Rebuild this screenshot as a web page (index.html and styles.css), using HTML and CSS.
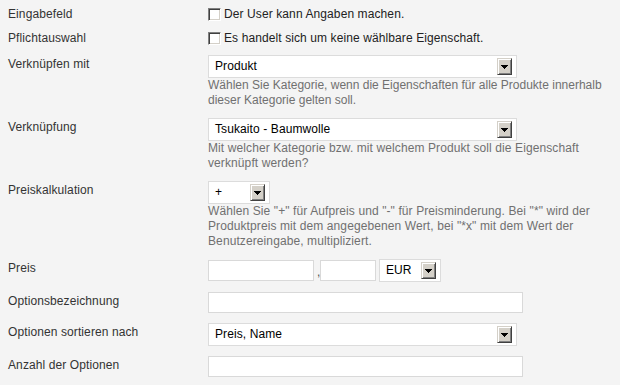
FILE: index.html
```html
<!DOCTYPE html>
<html lang="de">
<head>
<meta charset="utf-8">
<link rel="stylesheet" href="styles.css">
</head>
<body>
<div class="form">
  <div class="checks">
    <div class="row check-row">
      <div class="label">Eingabefeld</div>
      <div class="field"><label class="check"><span class="box"></span>Der User kann Angaben machen.</label></div>
    </div>
    <div class="row check-row">
      <div class="label">Pflichtauswahl</div>
      <div class="field"><label class="check"><span class="box"></span>Es handelt sich um keine wählbare Eigenschaft.</label></div>
    </div>
  </div>

  <div class="row">
    <div class="label">Verknüpfen mit</div>
    <div class="field">
      <div class="select wide"><span>Produkt</span><span class="btn"><svg width="7" height="4" viewBox="0 0 7 4"><path d="M0 0h7v1H0zM1 1h5v1H1zM2 2h3v1H2zM3 3h1v1H3z" fill="#000"/></svg></span></div>
      <div class="help tight">Wählen Sie Kategorie, wenn die Eigenschaften für alle Produkte innerhalb<br>dieser Kategorie gelten soll.</div>
    </div>
  </div>

  <div class="row">
    <div class="label">Verknüpfung</div>
    <div class="field">
      <div class="select wide"><span>Tsukaito - Baumwolle</span><span class="btn"><svg width="7" height="4" viewBox="0 0 7 4"><path d="M0 0h7v1H0zM1 1h5v1H1zM2 2h3v1H2zM3 3h1v1H3z" fill="#000"/></svg></span></div>
      <div class="help">Mit welcher Kategorie bzw. mit welchem Produkt soll die Eigenschaft<br>verknüpft werden?</div>
    </div>
  </div>

  <div class="row">
    <div class="label">Preiskalkulation</div>
    <div class="field">
      <div class="select small"><span>+</span><span class="btn"><svg width="7" height="4" viewBox="0 0 7 4"><path d="M0 0h7v1H0zM1 1h5v1H1zM2 2h3v1H2zM3 3h1v1H3z" fill="#000"/></svg></span></div>
      <div class="help">Wählen Sie "+" für Aufpreis und "-" für Preisminderung. Bei "*" wird der<br>Produktpreis mit dem angegebenen Wert, bei "*x" mit dem Wert der<br>Benutzereingabe, multipliziert.</div>
    </div>
  </div>

  <div class="row">
    <div class="label">Preis</div>
    <div class="field price">
      <span class="input p1"></span><span class="comma">,</span><span class="input p2"></span><div class="select small cur"><span>EUR</span><span class="btn"><svg width="7" height="4" viewBox="0 0 7 4"><path d="M0 0h7v1H0zM1 1h5v1H1zM2 2h3v1H2zM3 3h1v1H3z" fill="#000"/></svg></span></div>
    </div>
  </div>

  <div class="row">
    <div class="label">Optionsbezeichnung</div>
    <div class="field"><span class="input long"></span></div>
  </div>

  <div class="row">
    <div class="label">Optionen sortieren nach</div>
    <div class="field">
      <div class="select wide"><span>Preis, Name</span><span class="btn"><svg width="7" height="4" viewBox="0 0 7 4"><path d="M0 0h7v1H0zM1 1h5v1H1zM2 2h3v1H2zM3 3h1v1H3z" fill="#000"/></svg></span></div>
    </div>
  </div>

  <div class="row">
    <div class="label">Anzahl der Optionen</div>
    <div class="field"><span class="input long"></span></div>
  </div>
</div>
</body>
</html>
```

FILE: styles.css
```css
html, body {
  margin: 0;
  padding: 0;
  background: #f4f4f4;
}
body {
  font-family: "Liberation Sans", Arial, sans-serif;
  font-size: 12px;
  line-height: 15px;
  letter-spacing: 0.1px;
  color: #333;
}
.form {
  padding: 0 8px;
}
.checks {
  padding-bottom: 2px;
}
.row {
  display: grid;
  grid-template-columns: 200px 1fr;
  padding: 5px 0;
}
.row.check-row {
  padding: 5px 0 2px;
}
.label {
  padding-top: 2px;
  color: #333;
  white-space: nowrap;
}
.check {
  display: block;
  padding-top: 2px;
  color: #222;
  white-space: nowrap;
}
.box {
  display: inline-block;
  width: 13px;
  height: 13px;
  box-sizing: border-box;
  vertical-align: -3px;
  margin-right: 3px;
  background: #fff;
  border: 1px solid;
  border-color: #808080 #fff #fff #808080;
  box-shadow: inset 1px 1px 0 #404040, inset -1px -1px 0 #d4d0c8;
}
.select {
  display: flex;
  align-items: center;
  justify-content: space-between;
  height: 23px;
  box-sizing: border-box;
  border: 1px solid #dcdcdc;
  background: #fff;
  padding: 0 4px 0 6px;
  color: #000;
  white-space: nowrap;
}
.select.wide {
  width: 309px;
}
.select.small {
  width: 62px;
}
.btn {
  display: flex;
  align-items: center;
  justify-content: center;
  width: 15px;
  height: 17px;
  box-sizing: border-box;
  background: #d4d0c8;
  border: 1px solid;
  border-color: #d4d0c8 #404040 #404040 #d4d0c8;
  box-shadow: inset 1px 1px 0 #fff, inset -1px -1px 0 #808080;
}
.btn svg {
  display: block;
}
.help {
  color: #707070;
  white-space: nowrap;
}
.help.tight {
  letter-spacing: 0;
}
.price {
  display: flex;
  align-items: center;
}
.input {
  display: block;
  height: 21px;
  box-sizing: border-box;
  border: 1px solid #d9d9d9;
  background: #fff;
}
.input.p1 {
  width: 106px;
}
.input.p2 {
  width: 56px;
}
.input.long {
  width: 315px;
}
.comma {
  width: 6px;
  padding-left: 3px;
  box-sizing: border-box;
  padding-top: 3px;
  color: #555;
}
.select.cur {
  margin-left: 3px;
}
```
